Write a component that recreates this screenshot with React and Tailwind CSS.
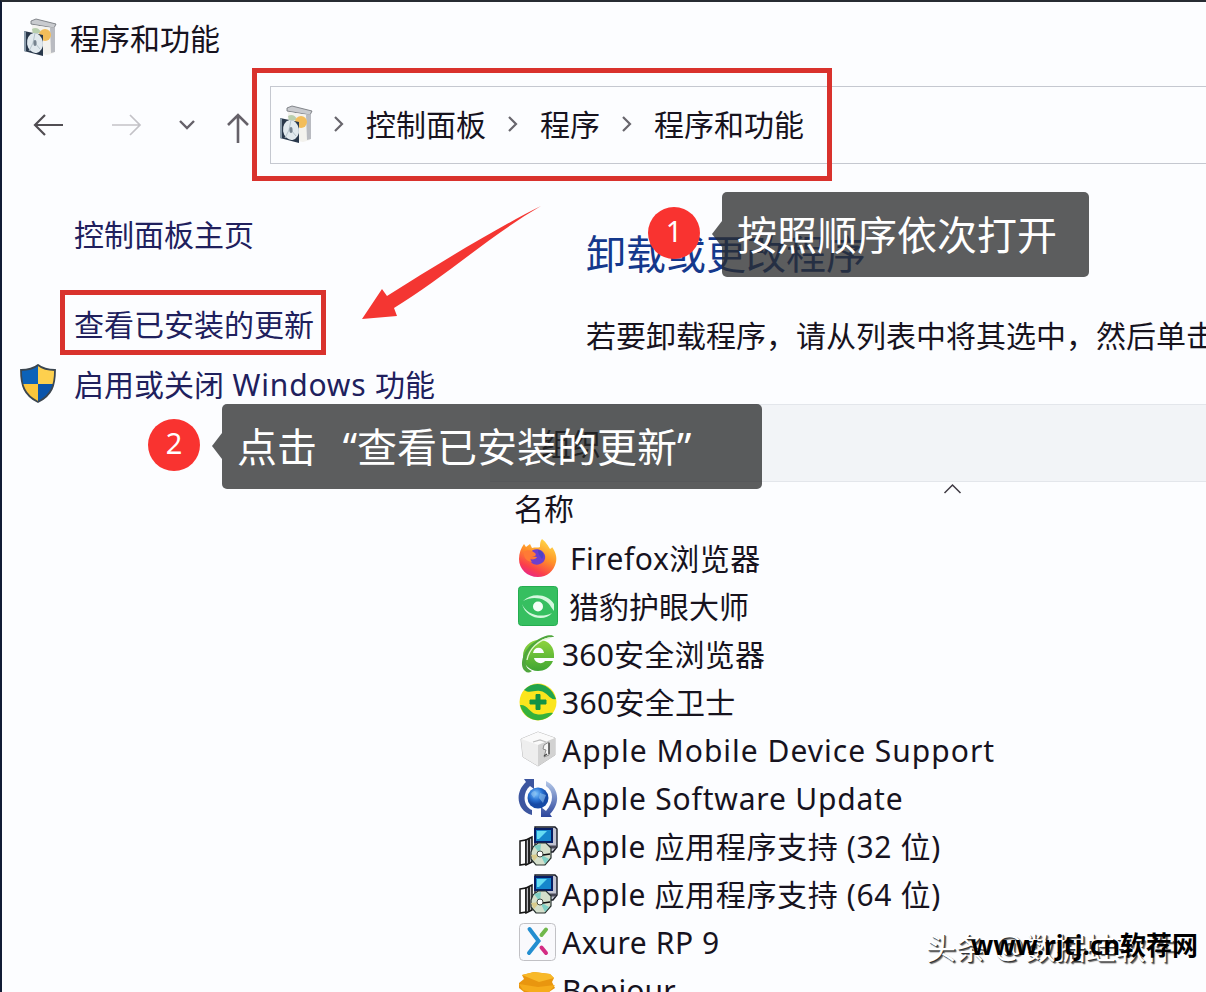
function ProgramsIcon({ className }) {
  return (
    <svg className={className} viewBox="0 0 34 40">
      <path d="M8 3L13 1L33 6L31 10L8 6Z" fill="#c9cbcf" stroke="#777a80" strokeWidth="0.9" />
      <path d="M9 7L31 10V35L24 37L8 34Z" fill="#f3f2ee" />
      <path d="M27 10L32 9V34L28 35Z" fill="#b9bbc1" />
      <path d="M9 11C12 9 17 10 18 15L10 16Z" fill="#b9cfae" />
      <circle cx="22" cy="17" r="6" fill="#f3bd5a" />
      <path d="M1 13L20 17V38L1 33Z" fill="#29384b" />
      <path d="M1 13L3 13.5V33.5L1 33Z" fill="#8b9cab" />
      <ellipse cx="12" cy="25" rx="8" ry="10" fill="#e1e9ee" transform="rotate(-9 12 25)" />
      <path d="M12 15L10 25L6 33M12 25L17 31" stroke="#b6c4cc" strokeWidth="1" fill="none" />
      <ellipse cx="12" cy="25" rx="1.6" ry="3" fill="#76838f" />
    </svg>
  );
}

function ShieldIcon() {
  return (
    <svg className="mb-1 h-[39px] w-[36px] shrink-0" viewBox="0 0 36 39">
      <defs>
        <clipPath id="shield">
          <path d="M18 1C13 5 7 6 1 6C1 21 4 31 18 38C32 31 35 21 35 6C29 6 23 5 18 1Z" />
        </clipPath>
      </defs>
      <g clipPath="url(#shield)">
        <path d="M0 0H18V20H0Z" fill="#0c62b8" />
        <path d="M18 0H36V20H18Z" fill="#fdd04e" />
        <path d="M0 20H18V39H0Z" fill="#fbc63c" />
        <path d="M18 20H36V39H18Z" fill="#0b55ab" />
      </g>
      <path
        d="M18 1C13 5 7 6 1 6C1 21 4 31 18 38C32 31 35 21 35 6C29 6 23 5 18 1Z"
        fill="none"
        stroke="#3b4650"
        strokeWidth="1.8"
      />
    </svg>
  );
}

function FirefoxIcon() {
  return (
    <svg className="h-10 w-10" viewBox="0 0 40 40">
      <defs>
        <linearGradient id="fox" x1="0.8" y1="0" x2="0.3" y2="1">
          <stop offset="0" stopColor="#ffe04a" />
          <stop offset="0.45" stopColor="#ff9328" />
          <stop offset="0.8" stopColor="#fb3f4b" />
          <stop offset="1" stopColor="#e7268a" />
        </linearGradient>
      </defs>
      <path
        d="M24 1C29 5 30 8 32 11C34 10 34 9 34 9C38 14 39 20 38 24C36 33 29 39 20 39C9 39 1 31 1 21C1 15 3 10 6 6L8 9L12 6L14 10C17 9 20 10 22 9C22 6 22 3 24 1Z"
        fill="url(#fox)"
      />
      <path d="M12 15C14 11 20 10 24 13C29 17 28 24 22 26C17 28 12 25 12 21C15 22 18 21 19 19C16 19 13 18 12 15Z" fill="#6d3fce" />
      <path d="M20 12C25 13 27 17 24 21C22 18 20 16 20 12Z" fill="#4c43c4" />
      <path d="M6 14C9 11 14 12 17 15C19 17 17 19 14 18C12 20 12 22 14 24C8 23 5 19 6 14Z" fill="#ff7a35" />
    </svg>
  );
}

function EyeIcon() {
  return (
    <svg className="h-10 w-10" viewBox="0 0 40 40">
      <rect x="0.5" y="0.5" width="39" height="39" rx="3" fill="#36bf60" stroke="#25ad50" />
      <path d="M5 15C14 6 30 8 36 18V25L33 21C29 12 15 9 5 15Z" fill="#d5f8de" />
      <path d="M4 18C8 28 22 33 34 27C27 36 8 33 4 18Z" fill="#d5f8de" />
      <circle cx="20" cy="20.500" r="5" fill="#f4fff7" />
    </svg>
  );
}

function BrowserIcon() {
  return (
    <svg className="h-10 w-10" viewBox="0 0 40 40">
      <defs>
        <linearGradient id="browser" x1="0" y1="0" x2="0" y2="1">
          <stop offset="0" stopColor="#8fd43d" />
          <stop offset="1" stopColor="#3fa533" />
        </linearGradient>
      </defs>
      <path
        d="M36 24H16C17 29 24 31 27 27H35C32 34 26 37 20 37C11 37 5 30 5 22C5 13 12 6 21 6C31 6 37 13 36 24ZM15 19H26C25 12 16 12 15 19Z"
        fill="url(#browser)"
        fillRule="evenodd"
      />
      <path d="M7 37C0 31 6 14 18 7C26 1 35 0 36 3C24 2 9 14 8 26C7 32 9 35 14 37C11 39 9 39 7 37Z" fill="#4fa63d" />
      <path d="M9 26C11 15 20 6 32 4" fill="none" stroke="#e3f7d3" strokeWidth="1.3" />
    </svg>
  );
}

function GuardIcon() {
  return (
    <svg className="h-10 w-10" viewBox="0 0 40 40">
      <circle cx="20" cy="20" r="18.500" fill="#fbe51d" />
      <path d="M6 8C15 -2 32 0 38 17C32 19 30 10 22 9C15 8 12 12 6 8Z" fill="#21a34c" />
      <path d="M2 23C9 22 12 31 18 32C25 34 29 30 35 31C26 42 7 41 2 23Z" fill="#35b13c" />
      <path d="M18 12.500H22V18H28V22H22V27.500H18V22H12V18H18Z" fill="#139245" stroke="#139245" strokeLinejoin="round" />
    </svg>
  );
}

function BoxIcon() {
  return (
    <svg className="h-10 w-10" viewBox="0 0 40 40">
      <path d="M3 9L20 2L37 8V25L20 36L5 27Z" fill="#f2f2f2" stroke="#bcbcbc" />
      <path d="M3 9L20 2L37 8L20 15Z" fill="#fafafa" />
      <path d="M20 15L37 8V25L20 36Z" fill="#d2d2d2" />
      <path d="M3 9L20 15V36L5 27Z" fill="#eeeeee" />
      <path d="M15 12L22 10L28 12" fill="none" stroke="#bcbcbc" strokeWidth="1.3" />
      <path d="M26 15L31 12V25L26 27L28 20L25 19Z" fill="#f6f6f6" stroke="#777" strokeWidth="0.8" />
      <path d="M31 13V24M26 26L29 24" stroke="#444" strokeWidth="1.3" />
    </svg>
  );
}

function UpdateIcon() {
  return (
    <svg className="h-10 w-10" viewBox="0 0 40 40">
      <defs>
        <radialGradient id="globe" cx="0.4" cy="0.3">
          <stop offset="0" stopColor="#81c8ff" />
          <stop offset="0.6" stopColor="#2a73d3" />
          <stop offset="1" stopColor="#164aa5" />
        </radialGradient>
        <linearGradient id="sweep" x1="0" y1="0" x2="0" y2="1">
          <stop offset="0" stopColor="#b5c9e9" />
          <stop offset="1" stopColor="#2b459c" />
        </linearGradient>
      </defs>
      <path d="M14 37C-1 33 -4 15 8 4L6 1H16V11L12 8C4 15 5 28 14 32Z" fill="#3c559f" />
      <path d="M28 3C41 9 43 25 32 36L34 39H23V29L28 33C36 24 36 13 28 8Z" fill="url(#sweep)" />
      <circle cx="20" cy="20" r="10.500" fill="url(#globe)" />
      <path d="M13 16C16 11 19 13 18 17L16 20ZM22 15L28 17L25 25L21 20Z" fill="#8fc1ee" opacity="0.6" />
    </svg>
  );
}

function InstallerIcon() {
  return (
    <svg className="h-10 w-10" viewBox="0 0 40 40">
      <path d="M17 1H37L39 3V21L35 26H17Z" fill="#c2c4d2" stroke="#181b25" strokeWidth="1.4" />
      <path d="M17 3H34V16H17Z" fill="#1486cc" stroke="#071e65" strokeWidth="2" />
      <path d="M19 5H29L21 13H19Z" fill="#65dcf2" />
      <path d="M18 21H38" stroke="#484856" strokeWidth="3" />
      <path d="M2 15L8 14V38L2 39Z" fill="#fff" stroke="#171717" strokeWidth="1.500" />
      <path d="M8 14L14 11V36L8 39Z" fill="#b9b9be" stroke="#171717" strokeWidth="1.500" />
      <path d="M11 13V37" stroke="#222" strokeWidth="2" />
      <path d="M15 21L20 17H28L33 22V32L27 39H18L13 33V26Z" fill="#d4dfcb" stroke="#26312f" strokeWidth="1.2" />
      <path d="M22 28L16 20L23 18ZM22 28L31 33L27 38Z" fill="#7ed0c5" />
      <path d="M22 28L13 29L16 35Z" fill="#d9cb8c" />
      <circle cx="22" cy="28" r="3" fill="#fff" stroke="#424942" />
      <path d="M25 29L32 28" stroke="#111" strokeWidth="1.500" />
    </svg>
  );
}

function AxureIcon() {
  return (
    <svg className="h-10 w-10" viewBox="0 0 40 40">
      <rect x="1.500" y="1.500" width="36" height="37" rx="4" fill="#f9f9fc" stroke="#c1c1c5" />
      <path d="M23.500 13L28 7.500" stroke="#70b84b" strokeWidth="4" strokeLinecap="round" />
      <path d="M23.500 25.500L28 31" stroke="#d42b83" strokeWidth="4" strokeLinecap="round" />
      <path d="M11.500 7L20.500 19L11 31" fill="none" stroke="#238ed0" strokeWidth="4" strokeLinecap="round" />
    </svg>
  );
}

function BonjourIcon() {
  return (
    <svg className="h-10 w-10" viewBox="0 0 40 40">
      <path d="M1 13L6 9L4 5L16 2L32 4L36 8L34 12L37 18L31 22V36H6V22L1 18Z" fill="#e9960f" />
      <path d="M4 5L16 2L32 4L36 8L21 12Z" fill="#f8b929" />
      <path d="M1 14L20 17L37 15L31 22L18 24L5 20Z" fill="#f6ac1b" />
    </svg>
  );
}

const programs = [
  { name: "Firefox浏览器", icon: FirefoxIcon, text: "pl-3 tracking-[0.5px]" },
  { name: "猎豹护眼大师", icon: EyeIcon, text: "pl-[11px]" },
  { name: "360安全浏览器", icon: BrowserIcon, text: "pl-1 tracking-[0.2px]" },
  { name: "360安全卫士", icon: GuardIcon, text: "pl-1 tracking-[0.3px]" },
  { name: "Apple Mobile Device Support", icon: BoxIcon, text: "pl-1 tracking-[1px]" },
  { name: "Apple Software Update", icon: UpdateIcon, text: "pl-1 tracking-[0.8px]" },
  { name: "Apple 应用程序支持 (32 位)", icon: InstallerIcon, text: "pl-1 tracking-[0.65px]" },
  { name: "Apple 应用程序支持 (64 位)", icon: InstallerIcon, text: "pl-1 tracking-[0.65px]" },
  { name: "Axure RP 9", icon: AxureIcon, text: "pl-1 tracking-[0.6px]" },
  { name: "Bonjour", icon: BonjourIcon, text: "pl-1 tracking-[0.1px]" },
];

function Separator() {
  return (
    <svg className="h-5 w-3 shrink-0" viewBox="0 0 12 20" fill="none" stroke="#68666d" strokeWidth="2.2">
      <path d="M2 3L9 10L2 17" />
    </svg>
  );
}

function NavBar() {
  return (
    <nav className="flex h-[78px] items-center">
      <div className="flex w-[268px] shrink-0 items-center pl-[31px]">
        <svg className="h-6 w-[31px]" viewBox="0 0 31 24" fill="none" stroke="#514e53" strokeWidth="2.2">
          <path d="M30 12H2M12 2L2 12L12 22" />
        </svg>
        <svg className="ml-[47px] h-6 w-[31px]" viewBox="0 0 31 24" fill="none" stroke="#c3c2c7" strokeWidth="1.7">
          <path d="M1 12H29M19 2L29 12L19 22" />
        </svg>
        <svg className="ml-[35px] h-4 w-[20px]" viewBox="0 0 20 16" fill="none" stroke="#656169" strokeWidth="2.4">
          <path d="M3 4L10 11L17 4" />
        </svg>
        <svg className="ml-[29px] mt-1.5 h-8 w-6" viewBox="0 0 24 32" fill="none" stroke="#656169" strokeWidth="2.6">
          <path d="M12 31V3M2 13L12 3L22 13" />
        </svg>
      </div>
      <div className="flex h-full flex-1 items-center border-y border-l border-[#c5c8d0] pl-2 text-[30px] whitespace-nowrap text-[#17131e]">
        <ProgramsIcon className="h-10 w-[34px] shrink-0" />
        <div className="ml-[20px] flex items-center gap-[21px] pb-0.5">
          <Separator />
          <span>控制面板</span>
          <Separator />
          <span>程序</span>
          <Separator />
          <span>程序和功能</span>
        </div>
      </div>
    </nav>
  );
}

function Sidebar() {
  return (
    <aside className="w-[488px] shrink-0 text-[30px] leading-[44px] whitespace-nowrap text-[#20205d]">
      <div className="pt-[49px] pl-[72px]">控制面板主页</div>
      <div className="pt-[46px] pl-[72px]">查看已安装的更新</div>
      <div className="flex items-center pt-4 pl-[18px]">
        <ShieldIcon />
        <span className="ml-[18px]">
          启用或关闭<span className="tracking-[0.8px]"> Windows </span>功能
        </span>
      </div>
    </aside>
  );
}

function Main() {
  return (
    <main className="min-w-0 flex-1 whitespace-nowrap">
      <h1 className="pt-[62px] pl-24 text-[40px] leading-[56px] text-[#14388c]">卸载或更改程序</h1>
      <p className="mt-[32px] pl-24 text-[30px] leading-[44px] text-[#17131e]">
        若要卸载程序，请从列表中将其选中，然后单击“卸载”
      </p>
      <div className="mt-[46px] flex h-[78px] items-center border-y border-[#e3e6eb] bg-[#f2f4f7] pl-[51px] text-[30px] text-black">
        组织
      </div>
      <div className="flex h-[52px] pl-6 text-[30px] leading-[53px] text-[#17131e]">
        <span>名称</span>
        <svg className="mt-[1px] ml-[369px] h-3 w-5" viewBox="0 0 20 12" fill="none" stroke="#3e3942" strokeWidth="1.500">
          <path d="M1.500 10L9.500 2L17.500 10" />
        </svg>
      </div>
      <ul className="pl-7 text-[30px] text-[#17131e]">
        {programs.map(({ name, icon: Icon, text }) => (
          <li key={name} className="flex h-12 items-center">
            <Icon />
            <span className={text}>{name}</span>
          </li>
        ))}
      </ul>
    </main>
  );
}

function Badge({ children, className }) {
  return (
    <div className={`absolute flex size-[52px] items-center justify-center rounded-full bg-[#f93330] pb-1 text-[29px] text-white ${className}`}>
      {children}
    </div>
  );
}

function Callout({ children, className }) {
  return (
    <div className={`absolute h-[85px] rounded-[5px] bg-[#2b2c2e]/77 pl-[15px] text-[40px] leading-[86px] whitespace-nowrap text-white ${className}`}>
      <svg className="absolute top-[29px] right-full h-[26px] w-[11px]" viewBox="0 0 11 26">
        <path d="M11 0L1 13L11 26Z" fill="#2b2c2e" fillOpacity="0.77" />
      </svg>
      {children}
    </div>
  );
}

function Annotations() {
  return (
    <>
      <div className="absolute top-[68px] left-[252px] h-[113px] w-[580px] border-[5px] border-[#d9322d]" />
      <div className="absolute top-[290px] left-[60px] h-[65px] w-[266px] border-[5px] border-[#d9322d]" />
      <svg className="absolute top-[204px] left-[360px] h-[120px] w-[184px]" viewBox="0 0 184 120">
        <path d="M181 2C135 25 81 58 27 92L22 85L2 115L37 112L34 104C82 75 131 31 181 2Z" fill="#f43632" />
      </svg>
      <Callout className="top-[192px] left-[722px] w-[367px]">按照顺序依次打开</Callout>
      <Callout className="top-[404px] left-[222px] w-[540px]">
        点击<span className="inline-block w-10 text-right">“</span>查看已安装的更新”
      </Callout>
      <Badge className="top-[207px] left-[648px]">1</Badge>
      <Badge className="top-[419px] left-[148px]">2</Badge>
    </>
  );
}

function Watermark() {
  return (
    <>
      <div className="absolute top-[925px] left-[926px] text-[30px] leading-[44px] whitespace-nowrap text-white [text-shadow:1px_1px_0_#333,2px_2px_1px_#666]">
        头条 <span className="mr-0.5 text-[33px]">@</span>数据蛙软件
      </div>
      <div className="absolute top-[926px] left-[971px] text-[26px] leading-[38px] font-bold whitespace-nowrap text-black">
        www.rjtj.cn软荐网
      </div>
    </>
  );
}

export default function App() {
  return (
    <div className="relative h-[992px] w-[1206px] overflow-hidden border-t-2 border-l-2 border-t-[#272c32] border-l-[#111c35] bg-[#fcfdff] font-['Noto_Sans','Noto_Sans_CJK_SC',sans-serif]">
      <header className="flex h-[84px] items-start pt-[15px] pl-[21px] text-[30px] leading-[44px] text-[#17131e]">
        <ProgramsIcon className="mt-px h-10 w-[34px]" />
        <span className="ml-[13px]">程序和功能</span>
      </header>
      <NavBar />
      <div className="flex">
        <Sidebar />
        <Main />
      </div>
      <div className="absolute -top-0.5 -left-0.5 h-[992px] w-[1206px]">
        <Annotations />
        <Watermark />
      </div>
    </div>
  );
}
